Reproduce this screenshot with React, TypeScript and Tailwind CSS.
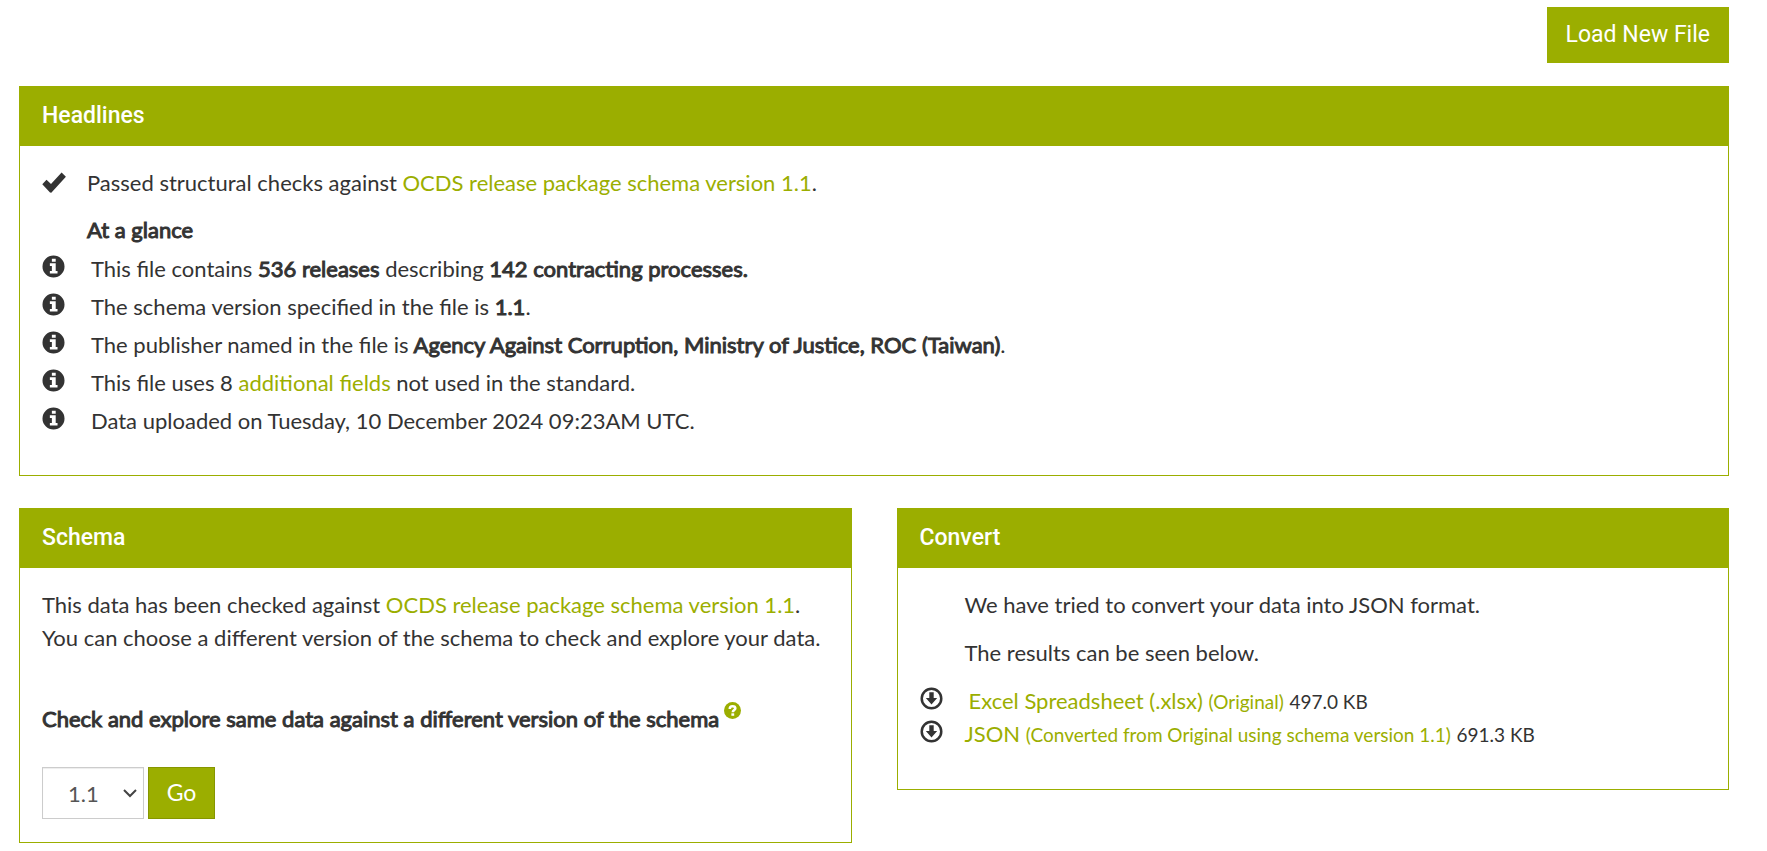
import React from "react";

const linkStyle = "text-[#9bae00]";
const iconStyle = "h-[23px] w-[23px] shrink-0 fill-[#333]";

function CheckIcon() {
  return (
    <svg viewBox="0 0 24 21" className="mt-[6px] h-[21px] w-6 shrink-0 fill-[#333]" aria-hidden="true">
      <path d="M.3 12.2 4.5 7.8 9 12 19.6.5 23.9 4.8 9.3 20.8 8 20.6z" />
    </svg>
  );
}

function InfoIcon() {
  return (
    <svg viewBox="0 0 24 24" className={iconStyle} fillRule="evenodd" aria-hidden="true">
      <path d="M12 .5a11.5 11.5 0 1 0 0 23 11.5 11.5 0 0 0 0-23zM10.3 4h4v3h-4zM8.2 8.7h6.1v8h1.9v2.5H8.2v-2.5h2.1v-5.3H8.2z" />
    </svg>
  );
}

function DownloadIcon() {
  return (
    <svg viewBox="0 0 24 24" className={iconStyle} aria-hidden="true">
      <circle cx="12" cy="12" r="10.2" className="fill-none stroke-[#333]" strokeWidth="2.6" />
      <path d="M9.7 5.6h4.6v6h3.6L12 18.2l-5.9-6.6h3.6z" />
    </svg>
  );
}

function HelpIcon() {
  return (
    <svg viewBox="0 0 18 18" className="h-[17px] w-[17px]" aria-hidden="true">
      <circle cx="9" cy="9" r="9" className="fill-[#9bae00]" />
      <path d="M6.1 7.4C6.1 5.2 7.3 4.5 9 4.5s3 .8 3 2.2c0 1.8-2.7 1.9-2.7 4.2" className="fill-none stroke-white" strokeWidth="2.7" />
      <path d="M7.8 12h3v2.6h-3z" className="fill-white" />
    </svg>
  );
}

function Strong({ children }: { children: React.ReactNode }) {
  return <strong className="font-normal [-webkit-text-stroke:1px_#333]">{children}</strong>;
}

function Panel({ title, children }: { title: string; children: React.ReactNode }) {
  return (
    <section className="border border-[#9bae00]">
      <h2 className="bg-[#9bae00] px-[22px] pt-[15px] pb-[17px] font-['Roboto',sans-serif] text-[23px] leading-[27px] font-medium text-white">
        {title}
      </h2>
      {children}
    </section>
  );
}

function Fact({ children }: { children: React.ReactNode }) {
  return (
    <li className="flex min-h-[38px] items-center gap-[26px]">
      <span className="pb-1"><InfoIcon /></span>
      <span>{children}</span>
    </li>
  );
}

function SchemaLink() {
  return <a href="#schema" className={linkStyle}>OCDS release package schema version 1.1</a>;
}

function Small({ children }: { children: React.ReactNode }) {
  return <small className="text-[19px] leading-none">{children}</small>;
}

export default function App() {
  return (
    <main className="pt-[7px] pr-[38px] pb-[7px] pl-[19px] font-['Lato',sans-serif] text-[22px] leading-[33px] text-[#333]">
      <div className="mb-[23px] flex justify-end">
        <button type="button" className="h-14 bg-[#9bae00] px-[19px] pb-0.5 font-['Roboto',sans-serif] text-[23px] text-white">
          Load New File
        </button>
      </div>

      <Panel title="Headlines">
        <div className="px-[22px] pt-5 pb-9">
          <div className="flex gap-[21px]">
            <CheckIcon />
            <p>Passed structural checks against <SchemaLink />.</p>
          </div>
          <h3 className="mt-[14px] mb-[3px] pl-[45px]"><Strong>At a glance</Strong></h3>
          <ul>
            <Fact>This file contains <Strong>536 releases</Strong> describing <Strong>142 contracting processes.</Strong></Fact>
            <Fact>The schema version specified in the file is <Strong>1.1</Strong>.</Fact>
            <Fact>The publisher named in the file is <Strong>Agency Against Corruption, Ministry of Justice, ROC (Taiwan)</Strong>.</Fact>
            <Fact>This file uses 8 <a href="#fields" className={linkStyle}>additional fields</a> not used in the standard.</Fact>
            <Fact>Data uploaded on Tuesday, 10 December 2024 09:23AM UTC.</Fact>
          </ul>
        </div>
      </Panel>

      <div className="mt-8 grid grid-cols-2 items-start gap-[45px]" id="schema">
        <Panel title="Schema">
          <form className="px-[22px] pt-5 pb-[23px]" onSubmit={(e) => e.preventDefault()}>
            <p>This data has been checked against <SchemaLink />.<br />You can choose a different version of the schema to check and explore your data.</p>
            <div className="mt-12 flex gap-[5px]">
              <label htmlFor="version"><Strong>Check and explore same data against a different version of the schema</Strong></label>
              <a href="#help" aria-label="Help"><HelpIcon /></a>
            </div>
            <div className="mt-8 flex gap-1">
              <div className="relative">
                <select id="version" defaultValue="1.1" className="h-[52px] w-[102px] appearance-none border border-[#ccc] bg-white pl-[25px] text-[22px] text-[#555] shadow-[inset_0_1px_1px_rgba(0,0,0,0.075)]">
                  <option>1.1</option>
                  <option>1.0</option>
                </select>
                <svg viewBox="0 0 14 9" className="pointer-events-none absolute top-[22px] right-[7px] h-[9px] w-[14px] fill-none stroke-[#444]" strokeWidth="2" aria-hidden="true">
                  <path d="M1 1l6 6 6-6" />
                </svg>
              </div>
              <button type="submit" className="h-[52px] w-[67px] border border-[#869600] bg-[#9bae00] pb-0.5 text-[23px] text-white">Go</button>
            </div>
          </form>
        </Panel>

        <Panel title="Convert">
          <div className="px-[22px] pt-5 pb-[39px]">
            <p className="pl-[45px]">We have tried to convert your data into JSON format.</p>
            <p className="mt-[15px] pl-[45px]">The results can be seen below.</p>
            <ul className="mt-[15px]">
              <li className="flex items-center gap-[26px]">
                <span className="flex pb-1"><DownloadIcon /></span>
                <span><a href="#xlsx" className={linkStyle}>Excel Spreadsheet (.xlsx) <Small>(Original)</Small></a> <Small>497.0 KB</Small></span>
              </li>
              <li className="flex items-center gap-[22px]">
                <span className="flex pb-1"><DownloadIcon /></span>
                <span><a href="#json" className={linkStyle}>JSON <Small>(Converted from Original using schema version 1.1)</Small></a> <Small>691.3 KB</Small></span>
              </li>
            </ul>
          </div>
        </Panel>
      </div>
    </main>
  );
}
